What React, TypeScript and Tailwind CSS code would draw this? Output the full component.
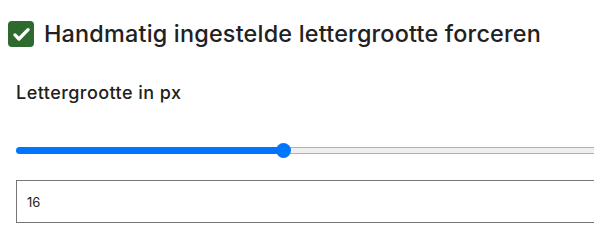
import { useState } from 'react'

export default function App() {
  const [checked, setChecked] = useState(true)
  const [size, setSize] = useState(16)
  const min = 1
  const max = 36
  const pct = ((size - min) / (max - min)) * 100

  return (
    <div
      className="w-[594px] h-[231px] overflow-hidden bg-white text-[#212121] flex flex-col pt-[21px]"
      style={{ fontFamily: 'Inter, "Noto Sans", sans-serif' }}
    >
      {/* Force manual font size */}
      <label className="flex items-center gap-[10px] pl-2 cursor-pointer select-none">
        <button
          type="button"
          onClick={() => setChecked((c) => !c)}
          className="w-[26px] h-[26px] shrink-0 rounded-[4px] bg-[#2e6a30] flex items-center justify-center"
        >
          {checked && (
            <svg viewBox="0 0 24 24" className="w-[21px] h-[21px]" fill="none" stroke="white" strokeWidth={3.8} strokeLinecap="round" strokeLinejoin="round">
              <path d="M4.5 12.5l4.6 4.6L19.5 6.5" />
            </svg>
          )}
        </button>
        <span className="text-[23.4px] leading-[26px] font-medium tracking-[0.2px]">
          Handmatig ingestelde lettergrootte forceren
        </span>
      </label>

      <div className="pl-4 w-[640px] flex flex-col">
        <div className="mt-[34px] text-[18px] leading-[24px] font-medium tracking-[0.45px]">Lettergrootte in px</div>

        {/* Slider */}
        <div className="relative mt-[42px] h-[7px]">
          <div className="flex h-full">
            <div className="h-full rounded-l-full bg-[#0075ff]" style={{ width: `${pct}%` }} />
            <div className="h-full flex-1 rounded-r-full bg-[#efefef] border border-[#b2b2b2]" />
          </div>
          <div
            className="absolute -top-[4px] -ml-[7.5px] w-[15px] h-[15px] rounded-full bg-[#0075ff]"
            style={{ left: `${pct}%` }}
          />
          <input
            type="range"
            min={min}
            max={max}
            value={size}
            onChange={(e) => setSize(Number(e.target.value))}
            className="absolute -inset-y-2 inset-x-0 w-full opacity-0 cursor-pointer"
          />
        </div>

        {/* Value */}
        <input
          type="text"
          value={size}
          onChange={(e) => setSize(Number(e.target.value) || 0)}
          className="mt-[26px] block w-full h-[43px] border border-[#767676] px-[10px] text-[13px] text-[#222] outline-none"
        />
      </div>
    </div>
  )
}
